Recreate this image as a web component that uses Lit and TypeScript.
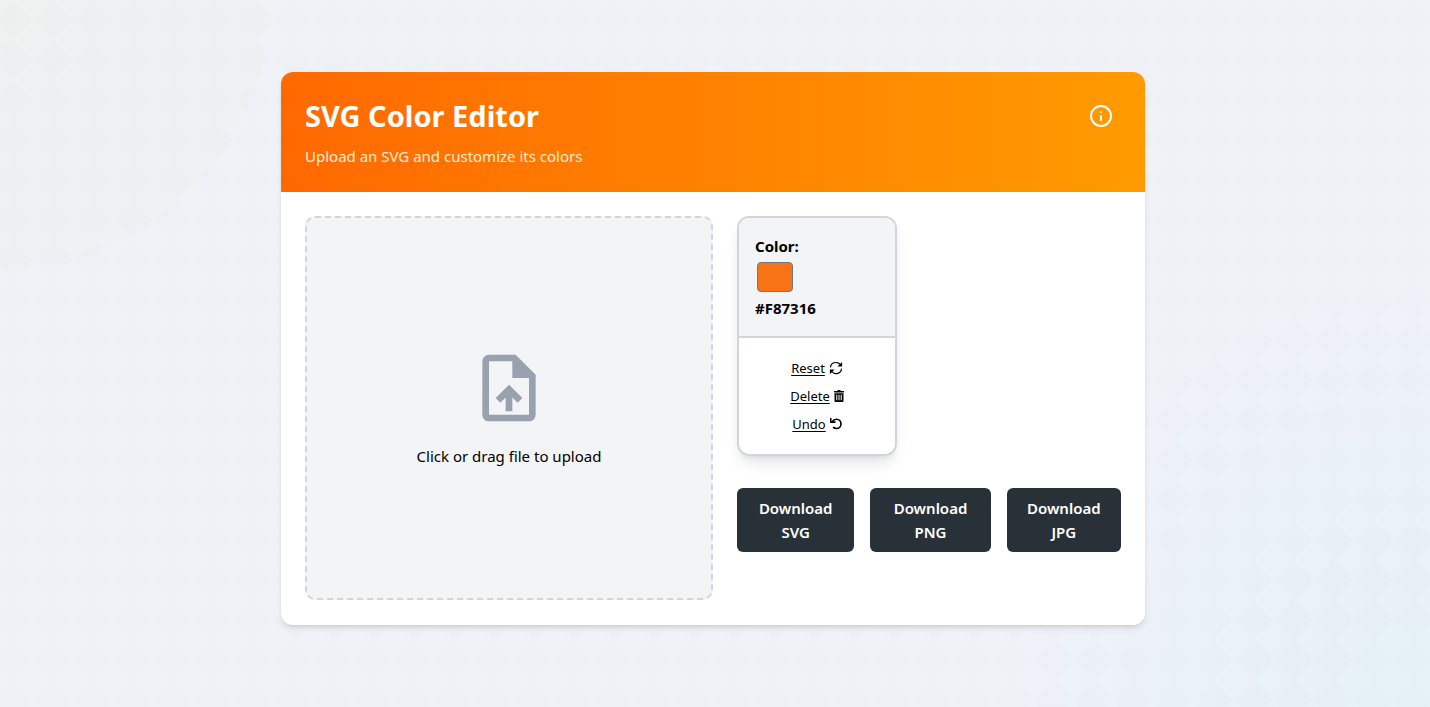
import { LitElement, html, css, svg } from "lit";
import { customElement, state } from "lit/decorators.js";

const infoIcon = svg`<svg viewBox="0 0 24 24" width="24" height="24" fill="none" stroke="currentColor" stroke-width="2" stroke-linecap="round" stroke-linejoin="round" aria-hidden="true"><circle cx="12" cy="12" r="10"/><path d="M12 16v-4M12 8h.01"/></svg>`;
const uploadIcon = svg`<svg class="upload-icon" viewBox="0 0 24 24" width="80" height="80" fill="currentColor" aria-hidden="true"><path d="M14 2H6c-1.1 0-1.99.9-1.99 2L4 20c0 1.1.89 2 1.99 2H18c1.1 0 2-.9 2-2V8l-6-6zm4 18H6V4h7v5h5v11zM8 15.01l1.41 1.41L11 14.84V19h2v-4.16l1.59 1.59L16 15.01 12.01 11 8 15.01z"/></svg>`;
const resetIcon = svg`<svg viewBox="0 0 24 24" width="14" height="14" fill="none" stroke="currentColor" stroke-width="2" aria-hidden="true"><path d="M2.500 11C3 6 7 2.500 12 2.500c3.500 0 6.500 1.800 8.200 4.800M21.500 13c-.5 5-4.500 8.500-9.500 8.500-3.500 0-6.500-1.800-8.200-4.800"/><path d="M22.500 1.500v8H14.500zM1.500 22.500v-8H9.500z" fill="currentColor" stroke="none"/></svg>`;
const trashIcon = svg`<svg viewBox="0 0 10 12" width="10" height="12" fill="currentColor" aria-hidden="true"><path fill-rule="evenodd" d="M3.500 0h3v1H10v1.500H0V1h3.500zM.5 3.300h9V11a1 1 0 0 1-1 1h-7a1 1 0 0 1-1-1zM2.300 4.800v5.500h1V4.800zM4.500 4.800v5.500h1V4.800zM6.700 4.800v5.500h1V4.800z"/></svg>`;
const undoIcon = svg`<svg viewBox="0 0 24 24" width="12" height="12" aria-hidden="true"><path d="M4 8C6.500 4.200 9.500 2.500 13 2.500c5 0 9 4.200 9 9.300s-4 9.200-9 9.200c-2.700 0-5-1-6.800-2.800" fill="none" stroke="currentColor" stroke-width="3.400"/><path d="M0 0h3v6.500H11V9.800H0z" fill="currentColor"/></svg>`;

@customElement("app-root")
export class AppRoot extends LitElement {
  @state() private color = "#f87316";

  static styles = css`
    :host {
      display: block;
      box-sizing: border-box;
      min-height: 100vh;
      padding: 72px 20px 72px 16px;
      font-family: "Segoe UI", "Noto Sans", "Open Sans", sans-serif;
      font-size: 15px;
      line-height: 24px;
      color: #000;
      background:
        radial-gradient(circle at top left, rgba(255, 160, 0, 0.035), transparent 380px),
        radial-gradient(circle at bottom right, rgba(0, 190, 255, 0.04), transparent 440px),
        url("data:image/svg+xml,%3Csvg xmlns='http://www.w3.org/2000/svg' width='40' height='40'%3E%3Cpath d='M20 0L40 20L20 40L0 20Z' fill='%23edf1f6'/%3E%3C/svg%3E") -7px 0 / 40px 40px,
        #eff3f8;
    }
    * { box-sizing: border-box; }
    h1, p { margin: 0; }
    button, input { font: inherit; color: inherit; margin: 0; cursor: pointer; }
    .card {
      max-width: 864px;
      margin: 0 auto;
      border-radius: 12px;
      overflow: hidden;
      background: #fff;
      box-shadow: 0 4px 6px -1px rgba(0, 0, 0, 0.1), 0 2px 4px -2px rgba(0, 0, 0, 0.1);
    }
    .header {
      display: flex;
      justify-content: space-between;
      align-items: flex-start;
      padding: 24px;
      color: #fff;
      background: linear-gradient(to right, #ff6900, #ff9b00);
    }
    .title { font-size: 29px; line-height: 40px; font-weight: 700; }
    .subtitle { margin-top: 8px; color: #ffedd5; }
    .info { display: flex; padding: 8px; border: 0; background: none; border-radius: 50%; }
    .body { display: flex; align-items: flex-start; gap: 24px; padding: 24px 24px 25px; }
    .drop {
      display: flex;
      flex: 0 0 50%;
      flex-direction: column;
      align-items: center;
      justify-content: center;
      gap: 16px;
      height: 384px;
      border: 2px dashed #d1d5dc;
      border-radius: 10px;
      background: #f3f4f6;
      cursor: pointer;
    }
    .drop input { display: none; }
    .upload-icon { color: #99a1af; }
    .side { flex: 1; min-width: 0; }
    .panel {
      width: 160px;
      border: 2px solid #d1d5dc;
      border-radius: 12px;
      overflow: hidden;
      box-shadow: 0 10px 15px -3px rgba(0, 0, 0, 0.1), 0 4px 6px -4px rgba(0, 0, 0, 0.1);
    }
    .swatch {
      display: flex;
      flex-direction: column;
      align-items: flex-start;
      padding: 16px;
      font-weight: 700;
      background: #f3f4f6;
      border-bottom: 2px solid #d1d5dc;
    }
    .picker {
      appearance: none;
      width: 40px;
      height: 38px;
      padding: 4px 2px;
      border: 0;
      background: none;
    }
    .picker::-webkit-color-swatch-wrapper { padding: 0; }
    .picker::-webkit-color-swatch { border: 1px solid #6b7a85; border-radius: 4px; }
    .actions {
      display: flex;
      flex-direction: column;
      align-items: center;
      gap: 8px;
      padding: 20px 16px;
    }
    .action {
      display: flex;
      align-items: center;
      gap: 4px;
      padding: 0;
      border: 0;
      background: none;
      font-size: 13px;
      line-height: 20px;
    }
    .action span { text-decoration: underline; text-underline-offset: 2px; }
    .downloads { display: flex; gap: 16px; margin-top: 32px; }
    .download {
      flex: 1 1 auto;
      padding: 8px 16px;
      border: 0;
      border-radius: 6px;
      color: #fff;
      background: #293138;
      font-weight: 600;
    }
    @media (max-width: 700px) {
      .body { flex-direction: column; align-items: stretch; }
      .drop { flex: none; }
    }
  `;

  private pick(e: Event) {
    this.color = (e.target as HTMLInputElement).value;
  }

  render() {
    return html`
      <main class="card">
        <header class="header">
          <div>
            <h1 class="title">SVG Color Editor</h1>
            <p class="subtitle">Upload an SVG and customize its colors</p>
          </div>
          <button class="info" aria-label="Information">${infoIcon}</button>
        </header>
        <div class="body">
          <label class="drop">
            ${uploadIcon}
            <span>Click or drag file to upload</span>
            <input type="file" accept=".svg" />
          </label>
          <section class="side">
            <div class="panel">
              <div class="swatch">
                <label for="color">Color:</label>
                <input class="picker" id="color" type="color" .value=${this.color} @input=${this.pick} />
                <span>${this.color.toUpperCase()}</span>
              </div>
              <div class="actions">
                <button class="action"><span>Reset</span>${resetIcon}</button>
                <button class="action"><span>Delete</span>${trashIcon}</button>
                <button class="action"><span>Undo</span>${undoIcon}</button>
              </div>
            </div>
            <div class="downloads">
              ${["SVG", "PNG", "JPG"].map((type) => html`<button class="download">Download ${type}</button>`)}
            </div>
          </section>
        </div>
      </main>
    `;
  }
}
